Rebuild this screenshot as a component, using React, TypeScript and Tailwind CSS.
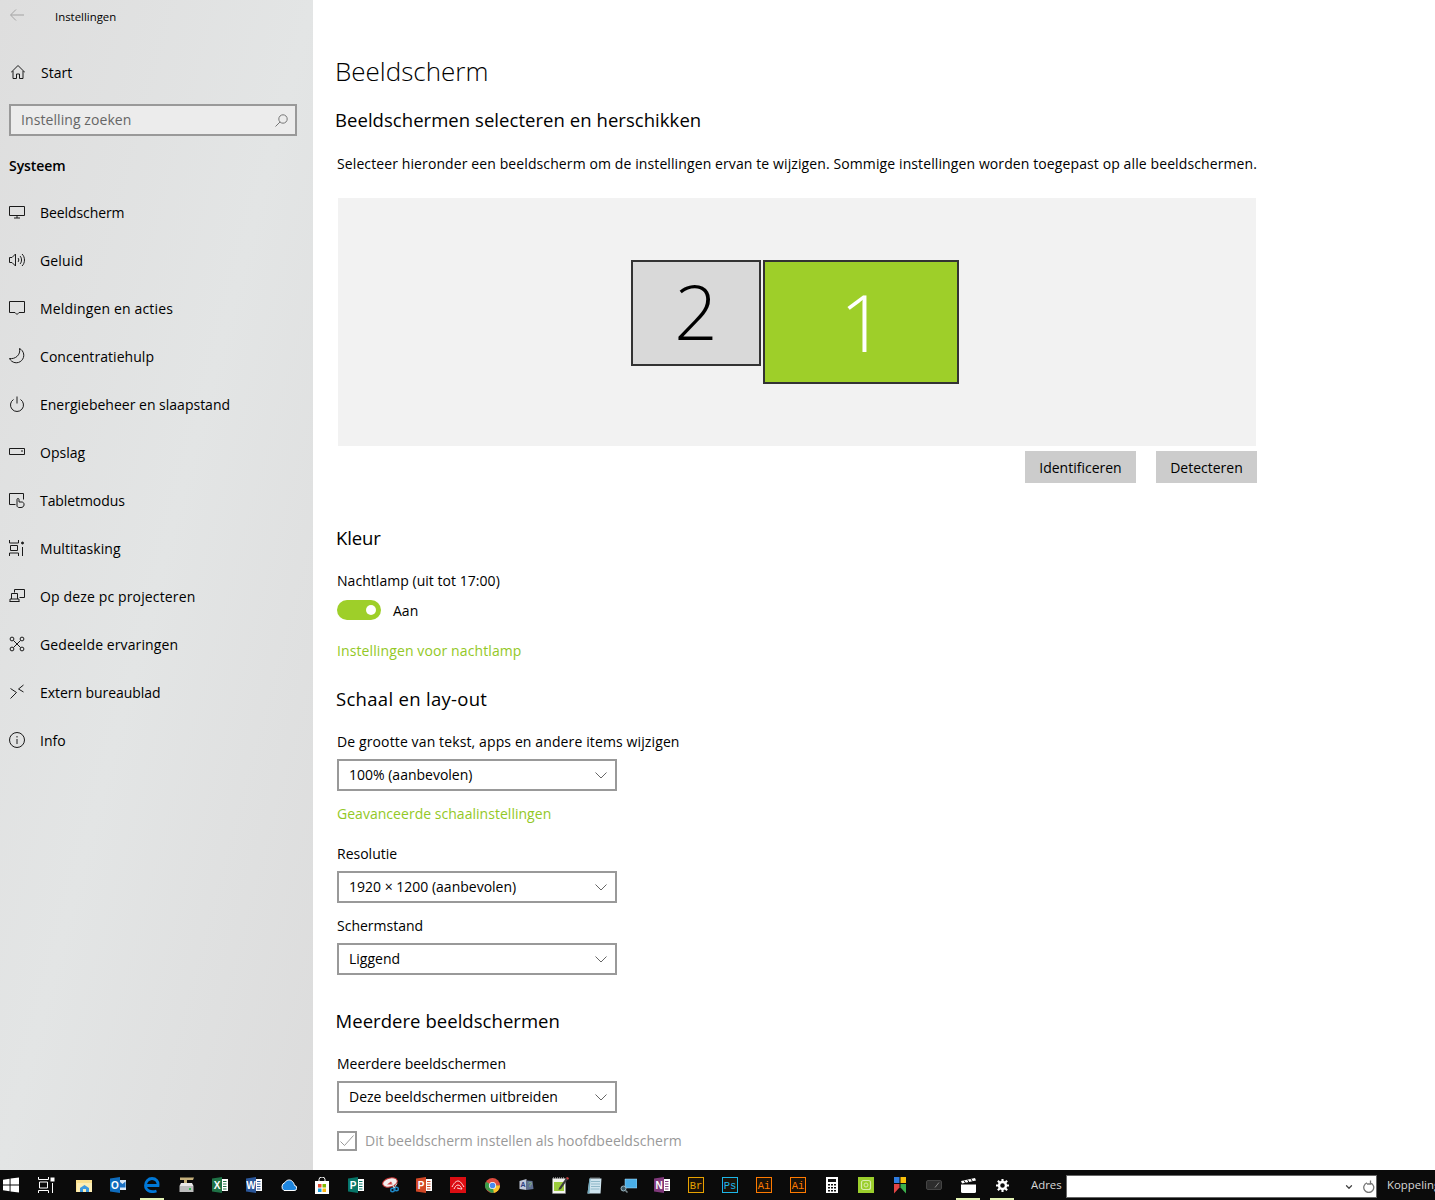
import React from "react";
import { ChevronDown } from "lucide-react";

const S = (p: { children: React.ReactNode; size?: number }) => (
  <svg width={p.size ?? 16} height={p.size ?? 16} viewBox="0 0 16 16" fill="none" stroke="#1a1a1a" strokeWidth="1" className="shrink-0">
    {p.children}
  </svg>
);

const navItems: { label: string; icon: React.ReactNode; track?: string }[] = [
  {
    label: "Beeldscherm",
    track: "tracking-[-0.08px]",
    icon: <S><path d="M0.5 2.5h15v9h-15z M8 11.5v2.5 M5 14h6" /></S>,
  },
  {
    label: "Geluid",
    track: "tracking-[0.15px]",
    icon: <S><path d="M0.5 5.5h2.5l3.500-3.500v12l-3.500-3.500h-2.500z M9 6c1 1 1 3 0 4 M11 4c2 2 2 6 0 8 M13 2c3.300 3 3.300 9 0 12" /></S>,
  },
  {
    label: "Meldingen en acties",
    track: "tracking-[0.16px]",
    icon: <S><path d="M0.5 1.5h15v11h-5.5l-2 2-2-2h-5.5z" /></S>,
  },
  {
    label: "Concentratiehulp",
    track: "tracking-[0.06px]",
    icon: <S><path d="M10.500 0.500A7.500 7.500 0 1 1 0.500 10.500C6 11.500 12 7 10.500 0.500z" /></S>,
  },
  {
    label: "Energiebeheer en slaapstand",
    icon: <S><path d="M8 0.5v7 M4.500 3.500a6.500 6.500 0 1 0 7 0" /></S>,
  },
  {
    label: "Opslag",
    icon: <S><path d="M0.500 4.500h15v6h-15z M12 7h2" /></S>,
  },
  {
    label: "Tabletmodus",
    track: "tracking-[-0.08px]",
    icon: <S><path d="M6.500 12.500h-6v-11h14v6 M8 14v-6.500a1 1 0 0 1 2 0v2.500h3c1 0 2 1 2 2v1c0 1.500-1.500 2.500-3 2.500h-2c-1 0-2-1-2-1.500z" /></S>,
  },
  {
    label: "Multitasking",
    track: "tracking-[0.08px]",
    icon: <S><path d="M0.500 0v3h9v-3 M0.500 16v-3h9v3 M1.500 5.500h7v5h-7z M13.500 7v9" /><circle cx="13.500" cy="3" r="1" fill="#1a1a1a" /></S>,
  },
  {
    label: "Op deze pc projecteren",
    track: "tracking-[0.14px]",
    icon: <S><path d="M5.500 4.500v-3h10v8h-5 M0.500 13.500h10 M2.500 11v-5.500h6v5.500M1 13.500v-2.500h9v2.500" /></S>,
  },
  {
    label: "Gedeelde ervaringen",
    track: "tracking-[0.1px]",
    icon: <S><circle cx="3" cy="3" r="1.900" /><circle cx="13" cy="3" r="1.900" /><circle cx="3" cy="13" r="1.900" /><circle cx="13" cy="13" r="1.900" /><path d="M4.500 4.500l7 7 M11.500 4.500l-7 7" /></S>,
  },
  {
    label: "Extern bureaublad",
    track: "tracking-[-0.06px]",
    icon: <S><path d="M1.500 4.500l6 4-6 6 M14.500 1l-5 4 5 3" /></S>,
  },
  {
    label: "Info",
    icon: <S><circle cx="8" cy="8" r="7.500" /><path d="M8 7v5 M8 4v1.500" /></S>,
  },
];

function Select({ value }: { value: string }) {
  return (
    <div className="mt-[7px] flex h-8 w-[280px] items-center justify-between border-2 border-[#999999] pl-[10px] pr-[8px] text-[14px]">
      <span className="pb-[2px]">{value}</span>
      <svg width="12" height="7" viewBox="0 0 12 7" fill="none" stroke="#666666" strokeWidth="1">
        <path d="M0.500 0.500l5.500 5.500 5.500-5.500" />
      </svg>
    </div>
  );
}

function Slot({ children, dot }: { children: React.ReactNode; dot?: boolean }) {
  return (
    <div className="relative flex h-[30px] w-[34px] shrink-0 items-center justify-center">
      {children}
      {dot && <span className="absolute bottom-0 left-[5px] h-[2px] w-[24px] bg-[#e3f3b4]" />}
    </div>
  );
}

function AdobeBox({ label, color }: { label: string; color: string }) {
  return (
    <svg width="16" height="16" viewBox="0 0 16 16">
      <rect x="0.500" y="0.500" width="15" height="15" fill="#1a1208" stroke={color} />
      <text x="8" y="12" fontSize="10.500" fontFamily="Liberation Mono, monospace" fill={color} textAnchor="middle">{label}</text>
    </svg>
  );
}

function OfficeIcon({ letter, color, side }: { letter: string; color: string; side?: string }) {
  return (
    <svg width="16" height="16" viewBox="0 0 16 16">
      <rect x="7" y="2" width="9" height="12" fill="#ffffff" />
      <path d="M11 4.500h3.500M11 7h3.500M11 9.500h3.500M11 12h3.500" stroke={side ?? color} strokeWidth="1" />
      <path d="M0 1.500l10-1.500v16l-10-1.500z" fill={color} />
      <text x="5" y="12" fontSize="10" fontWeight="700" fontFamily="Liberation Sans, sans-serif" fill="#ffffff" textAnchor="middle">{letter}</text>
    </svg>
  );
}

const taskIcons: { icon: React.ReactNode; dot?: boolean }[] = [
  {
    icon: (
      <svg width="17" height="15" viewBox="0 0 17 15">
        <path d="M0 2h16v12h-16z" fill="#fbe08f" />
        <path d="M1 5h15v9h-15z" fill="#fdeeb5" />
        <path d="M4 14v-4l4.500-3 4.500 3v4h-3v-3h-3v3z" fill="#3f9be0" />
      </svg>
    ),
  },
  {
    icon: (
      <svg width="16" height="16" viewBox="0 0 16 16">
        <path d="M9 3h7v10h-7z" fill="#dce9f7" />
        <path d="M10 5l2.500 2 3-2.500v6h-5.500z" fill="#1c72c4" />
        <path d="M0 1.500l10-1.500v16l-10-1.500z" fill="#0f6cbd" />
        <text x="5" y="12" fontSize="10" fontWeight="700" fontFamily="Liberation Sans, sans-serif" fill="#ffffff" textAnchor="middle">O</text>
      </svg>
    ),
  },
  {
    dot: true,
    icon: (
      <svg width="16" height="16" viewBox="0 0 16 16" fill="none">
        <path d="M2.500 8.500h11.500c0.500-4-2-7-6-7-3.500 0-6.500 3-6.500 7 0 4.500 4.500 7.500 11 5.500" stroke="#0078d7" strokeWidth="2.800" />
      </svg>
    ),
  },
  {
    icon: (
      <svg width="17" height="16" viewBox="0 0 17 16">
        <path d="M2 0.500h14l-1 2.500h-6v3h-3v-3h-4z" fill="#c6b17c" />
        <path d="M1.500 9h14v6h-14z" fill="#bdbdbd" />
        <path d="M1.500 9l1.500-3h11l1.500 3z" fill="#e9e9e9" />
        <rect x="11" y="11" width="2" height="2" fill="#30c050" />
      </svg>
    ),
  },
  { icon: <OfficeIcon letter="X" color="#1f7246" /> },
  { icon: <OfficeIcon letter="W" color="#2b579a" /> },
  {
    icon: (
      <svg width="17" height="12" viewBox="0 0 17 12">
        <path d="M4 11.500h10a2.500 2.500 0 0 0 0.500-5c-0.500-3-3-6-6-5.500-2 0.300-3 1.500-3.500 2.500a4.500 4.500 0 0 0-1 8z" fill="#1e86df" stroke="#ffffff" strokeWidth="1" />
      </svg>
    ),
  },
  {
    icon: (
      <svg width="16" height="17" viewBox="0 0 16 17">
        <path d="M5 4v-1.500a3 2.500 0 0 1 6 0v1.500" fill="none" stroke="#ffffff" />
        <rect x="1" y="4" width="14" height="13" fill="#ffffff" />
        <rect x="4" y="7" width="3.500" height="3.500" fill="#e8492f" />
        <rect x="8.500" y="7" width="3.500" height="3.500" fill="#7eb900" />
        <rect x="4" y="11.500" width="3.500" height="3.500" fill="#1ea2e0" />
        <rect x="8.500" y="11.500" width="3.500" height="3.500" fill="#fdb813" />
      </svg>
    ),
  },
  { icon: <OfficeIcon letter="P" color="#077568" /> },
  {
    icon: (
      <svg width="17" height="16" viewBox="0 0 17 16">
        <ellipse cx="8" cy="5.500" rx="7.500" ry="4.500" fill="#f3eeee" stroke="#c03030" strokeWidth="1" transform="rotate(-15 8 5.500)" />
        <path d="M5 7.500h6l-2-3z" fill="#d04040" />
        <circle cx="10.500" cy="13" r="1.800" fill="none" stroke="#1e88c8" strokeWidth="1.400" />
        <circle cx="14.500" cy="12" r="1.800" fill="none" stroke="#1e88c8" strokeWidth="1.400" />
        <path d="M10 6l2 5M15 6.500l-3 4.500" stroke="#dddddd" strokeWidth="1" />
      </svg>
    ),
  },
  { icon: <OfficeIcon letter="P" color="#d24726" /> },
  {
    icon: (
      <svg width="16" height="16" viewBox="0 0 16 16">
        <rect width="16" height="16" fill="#dc0d12" />
        <path d="M2 10c2-4 4-6 6-6 2.500 0 4 3 6 6M4 12c1-2 2-4 4-4 2 0 3 2 4 4-2 0-4-1-5-1" fill="none" stroke="#ffe0e0" strokeWidth="1" />
      </svg>
    ),
  },
  {
    icon: (
      <svg width="15" height="15" viewBox="0 0 16 16">
        <circle cx="8" cy="8" r="8" fill="#dd4b3e" />
        <path d="M8 8l-6.900 4a8 8 0 0 1 0-8z" fill="#3a9e4a" />
        <path d="M1.100 12l6.900-4 6.900 0a8 8 0 0 1-8 8z" fill="#3a9e4a" />
        <path d="M8 8h8a8 8 0 0 1-6.500 7.900z" fill="#fbc32b" />
        <circle cx="8" cy="8" r="3.800" fill="#ffffff" />
        <circle cx="8" cy="8" r="3" fill="#4a8af0" />
      </svg>
    ),
  },
  {
    icon: (
      <svg width="16" height="12" viewBox="0 0 16 12">
        <path d="M1.500 2l7-2v11l-7-1z" fill="#c2c9dc" />
        <path d="M8.500 1.500l6 0.500 1 8-7 1z" fill="#5f6f92" />
        <text x="5" y="8" fontSize="7" fontWeight="700" fontFamily="Liberation Sans, sans-serif" fill="#2c3e80" textAnchor="middle">A</text>
        <text x="12" y="8" fontSize="7" fontFamily="Liberation Sans, sans-serif" fill="#9ed080" textAnchor="middle">?</text>
      </svg>
    ),
  },
  {
    icon: (
      <svg width="17" height="17" viewBox="0 0 17 17">
        <path d="M0.500 1.500h13v15h-13z" fill="#f4f4f0" stroke="#8a8a8a" strokeWidth="0.500" />
        <path d="M1.500 1.500v-1M3.500 1.500v-1M5.500 1.500v-1M7.500 1.500v-1M9.500 1.500v-1M11.500 1.500v-1" stroke="#dddddd" />
        <rect x="2" y="5" width="10" height="9" fill="#9ccc3c" />
        <path d="M7 11l7-10 2 1-7 10-2.500 1z" fill="#3c3c3c" />
        <path d="M14 1l1-1 2 1-1 2z" fill="#d04040" />
      </svg>
    ),
  },
  {
    icon: (
      <svg width="15" height="17" viewBox="0 0 15 17">
        <path d="M2.500 1.500h12l-1 15h-13z" fill="#cfe4ee" />
        <path d="M0.500 16.500l2-15h1l-1 15z" fill="#70a8bc" />
        <path d="M4 4.500h9M4 7h9M4 9.500h9M3.500 12h9" stroke="#8fb8c8" />
        <path d="M4 1.500v-1M6 1.500v-1M8 1.500v-1M10 1.500v-1M12 1.500v-1" stroke="#c8d8e0" />
      </svg>
    ),
  },
  {
    icon: (
      <svg width="17" height="15" viewBox="0 0 17 15">
        <path d="M5 1h12v9h-12z" fill="#49aee8" stroke="#a8d8f4" strokeWidth="0.500" />
        <circle cx="3.500" cy="10.500" r="2.500" fill="#3e5a66" stroke="#a0bcc8" strokeWidth="1" />
        <path d="M5.500 12.500l2 2" stroke="#7a8a90" strokeWidth="1.500" />
      </svg>
    ),
  },
  { icon: <OfficeIcon letter="N" color="#80397b" /> },
  { icon: <AdobeBox label="Br" color="#e8a200" /> },
  { icon: <AdobeBox label="Ps" color="#1db5e8" /> },
  { icon: <AdobeBox label="Ai" color="#ff7a00" /> },
  { icon: <AdobeBox label="Ai" color="#ff7a00" /> },
  {
    icon: (
      <svg width="12" height="16" viewBox="0 0 12 16">
        <rect width="12" height="16" fill="#ffffff" />
        <rect x="2" y="2" width="8" height="3" fill="#111111" />
        <path d="M2 7h2v1.500h-2zM5 7h2v1.500h-2zM8 7h2v1.500h-2zM2 10h2v1.500h-2zM5 10h2v1.500h-2zM8 10h2v1.500h-2zM2 13h2v1.500h-2zM5 13h2v1.500h-2zM8 13h2v1.500h-2z" fill="#111111" />
      </svg>
    ),
  },
  {
    icon: (
      <svg width="16" height="16" viewBox="0 0 16 16">
        <rect width="16" height="16" fill="#9bce2c" />
        <rect x="3.500" y="3.500" width="9" height="9" rx="2" fill="none" stroke="#d9edae" strokeWidth="1.200" />
        <circle cx="8" cy="8" r="2" fill="none" stroke="#d9edae" />
      </svg>
    ),
  },
  {
    icon: (
      <svg width="12" height="17" viewBox="0 0 12 17">
        <rect x="0" y="0" width="5.500" height="6" fill="#2f7de1" />
        <rect x="6.500" y="0" width="5.500" height="6" fill="#f9c10b" />
        <path d="M0 7h5.500v3.500l-5.500 6z" fill="#e34545" />
        <path d="M6.500 7h5.500v9.500l-5.500-6z" fill="#3cb04c" />
      </svg>
    ),
  },
  {
    icon: (
      <svg width="16" height="10" viewBox="0 0 16 10">
        <rect x="0.500" y="0.500" width="15" height="9" rx="1.500" fill="#2d2d2d" stroke="#444444" />
        <path d="M9 7.500l4-5" stroke="#888888" />
      </svg>
    ),
  },
  {
    dot: true,
    icon: (
      <svg width="15" height="15" viewBox="0 0 15 15">
        <path d="M0 3l14-3 1 2.500-14 3z" fill="#ffffff" />
        <path d="M3 2.500l1.500 2.500M6.500 1.800l1.500 2.500M10 1l1.500 2.500" stroke="#111111" />
        <path d="M0 6.500h15v7a1.500 1.500 0 0 1-1.500 1.500h-12a1.500 1.500 0 0 1-1.500-1.500z" fill="#ffffff" />
      </svg>
    ),
  },
  {
    dot: true,
    icon: (
      <svg width="13" height="13" viewBox="0 0 16 16" fill="none">
        <circle cx="8" cy="8" r="4.300" stroke="#ffffff" strokeWidth="3" />
        <path d="M8 0v3M8 13v3M0 8h3M13 8h3M2.300 2.300l2.100 2.100M11.600 11.600l2.100 2.100M13.700 2.300l-2.100 2.100M4.400 11.600l-2.100 2.100" stroke="#ffffff" strokeWidth="2.600" />
      </svg>
    ),
  },
];

export default function App() {
  return (
    <div className="flex h-[1200px] w-[1435px] flex-col overflow-hidden bg-white font-['Open_Sans',sans-serif] text-[14px] text-black">
      <div className="flex h-[1170px] shrink-0">
        {/* zijbalk */}
        <aside className="flex w-[313px] shrink-0 flex-col bg-gradient-to-br from-[#dedede] via-[#e3e5e5] to-[#dcdcdc]">
          <div className="flex h-8 items-center pl-[10px]">
            <svg width="14" height="12" viewBox="0 0 14 12" fill="none" stroke="#a3a3a3" strokeWidth="1" className="-mt-[2px]">
              <path d="M14 6h-13 M6 0.500l-5.500 5.500 5.500 5.500" />
            </svg>
            <span className="ml-[31px] pt-[2px] text-[11.400px]">Instellingen</span>
          </div>
          <div className="mt-4 flex h-12 items-center pl-[11px]">
            <svg width="14" height="14" viewBox="0 0 14 14" fill="none" stroke="#1a1a1a" strokeWidth="1">
              <path d="M0 7.500l7-7 7 7 M2 6v7.500h3.500v-4.500h3v4.500h3.500v-7.500" />
            </svg>
            <span className="ml-4">Start</span>
          </div>
          <div className="mx-[9px] mt-2 flex h-8 w-[288px] items-center justify-between border-2 border-[#999999] bg-[#ececec] pl-[10px] pr-[7px] text-[#666666]">
            <span className="pb-[2px] tracking-[0.08px]">Instelling zoeken</span>
            <svg width="13" height="13" viewBox="0 0 13 13" fill="none" stroke="#777777" strokeWidth="1">
              <circle cx="8" cy="5" r="4.200" />
              <path d="M5 8l-4.500 4.500" />
            </svg>
          </div>
          <div className="mt-5 flex h-5 items-center pb-[2px] pl-[9px] font-semibold tracking-[-0.05px]">Systeem</div>
          <nav className="mt-3 flex flex-col">
            {navItems.map((item) => (
              <div key={item.label} className="flex h-12 items-center gap-[15px] pl-[9px]">
                {item.icon}
                <span className={item.track}>{item.label}</span>
              </div>
            ))}
          </nav>
        </aside>

        {/* inhoud */}
        <main className="flex min-w-0 flex-1 flex-col pl-6 pt-[52px]">
          <h1 className="-ml-0.5 flex h-10 items-center pb-[2px] text-[26px] font-light">Beeldscherm</h1>
          <h2 className="-ml-[2px] mt-[14px] flex h-7 items-center text-[18.500px] tracking-[0.05px]">Beeldschermen selecteren en herschikken</h2>
          <p className="mt-5 flex h-5 items-center pb-[2px] tracking-[0.105px]">Selecteer hieronder een beeldscherm om de instellingen ervan te wijzigen. Sommige instellingen worden toegepast op alle beeldschermen.</p>

          <div className="ml-px mt-6 flex h-[248px] w-[918px] items-start gap-[2px] bg-[#f2f2f2] pl-[293px] pt-[62px]">
            <div className="flex h-[106px] w-[130px] items-center justify-center border-2 border-[#333333] bg-[#d9d9d9] pb-[5px] text-[76px] font-light leading-none">2</div>
            <div className="flex h-[124px] w-[196px] items-center justify-center border-2 border-[#333333] bg-[#9ecf29] pb-[2px] pl-[3px] text-[80px] font-light leading-none text-white">1</div>
          </div>

          <div className="mt-[5px] flex w-[920px] justify-end gap-5">
            <div className="flex h-8 w-[111px] items-center justify-center bg-[#cccccc]">Identificeren</div>
            <div className="flex h-8 w-[101px] items-center justify-center bg-[#cccccc]">Detecteren</div>
          </div>

          <h2 className="-ml-px mt-[41px] flex h-7 items-center text-[18.500px] tracking-[-0.1px]">Kleur</h2>
          <div className="mt-[19px] flex h-5 items-center pb-[2px] tracking-[0.04px]">Nachtlamp (uit tot 17:00)</div>
          <div className="mt-[9px] flex h-5 items-center">
            <div className="flex h-5 w-11 items-center justify-end rounded-full bg-[#9ecf29] pr-[5px]">
              <span className="h-[10px] w-[10px] rounded-full bg-white" />
            </div>
            <span className="ml-3">Aan</span>
          </div>
          <div className="mt-[21px] flex h-5 items-center pb-[2px] tracking-[0.11px] text-[#93c826]">Instellingen voor nachtlamp</div>

          <h2 className="-ml-px mt-6 flex h-7 items-center text-[18.500px] tracking-[0.3px]">Schaal en lay-out</h2>
          <div className="mt-[19px] flex h-5 items-center pb-[2px] tracking-[0.12px]">De grootte van tekst, apps en andere items wijzigen</div>
          <Select value="100% (aanbevolen)" />
          <div className="mt-[13px] flex h-5 items-center pb-[2px] tracking-[0.03px] text-[#93c826]">Geavanceerde schaalinstellingen</div>
          <div className="mt-5 flex h-5 items-center pb-[2px]">Resolutie</div>
          <Select value="1920 × 1200 (aanbevolen)" />
          <div className="mt-[13px] flex h-5 items-center pb-[2px]">Schermstand</div>
          <Select value="Liggend" />

          <h2 className="-ml-[1.500px] mt-8 flex h-7 items-center text-[18.500px] tracking-[0.05px]">Meerdere beeldschermen</h2>
          <div className="mt-[19px] flex h-5 items-center pb-[2px]">Meerdere beeldschermen</div>
          <Select value="Deze beeldschermen uitbreiden" />
          <div className="mt-[18px] flex h-5 items-center text-[#999999]">
            <div className="flex h-5 w-5 items-center justify-center border-2 border-[#999999]">
              <svg width="14" height="12" viewBox="0 0 14 12" fill="none" stroke="#999999" strokeWidth="1">
                <path d="M0.500 6.500l4 4 9-10" />
              </svg>
            </div>
            <span className="ml-2 pb-[2px] tracking-[0.04px]">Dit beeldscherm instellen als hoofdbeeldscherm</span>
          </div>
        </main>
      </div>

      {/* taakbalk */}
      <footer className="flex h-[30px] shrink-0 items-center overflow-hidden bg-[#0b0b0b] text-[11.400px] text-[#d8d8d8]">
        <div className="flex h-[30px] w-[19px] shrink-0 items-center justify-end">
          <svg width="16" height="16" viewBox="0 0 17 16" fill="#ffffff">
            <path d="M0 2.300l7-1v6.200h-7z M8 1.100l9-1.100v7.500h-9z M0 8.500h7v6.200l-7-1z M8 8.500h9v7.500l-9-1.100z" />
          </svg>
        </div>
        <div className="ml-[10px]">
          <Slot>
            <svg width="17" height="16" viewBox="0 0 17 16" fill="none" stroke="#ffffff" strokeWidth="1">
              <path d="M0.500 0v2.500h10v-2.500 M0.500 16v-2.500h10v2.500 M1.500 5h8v6h-8z M14.500 6v10" />
              <rect x="13" y="1" width="3" height="3" fill="#ffffff" />
            </svg>
          </Slot>
        </div>
        <div className="ml-1 flex">
          {taskIcons.map((t, i) => (
            <Slot key={i} dot={t.dot}>
              {t.icon}
            </Slot>
          ))}
        </div>
        <span className="ml-3 w-[30px] shrink-0 whitespace-nowrap">Adres</span>
        <div className="ml-[5px] mt-[3px] flex h-[23px] w-[311px] shrink-0 items-center justify-end border border-[#666666] bg-white pr-[1px]">
          <ChevronDown size={10} strokeWidth={3} className="text-[#444444]" />
          <svg width="12" height="13" viewBox="0 0 12 13" fill="none" stroke="#777777" strokeWidth="1.300" className="ml-[9px]">
            <path d="M4 2.800a5 5 0 1 0 3.500 0 M7.500 0.500v3.500h-3.500" />
          </svg>
        </div>
        <span className="ml-[10px] shrink-0 whitespace-nowrap">Koppelingen</span>
      </footer>
    </div>
  );
}
